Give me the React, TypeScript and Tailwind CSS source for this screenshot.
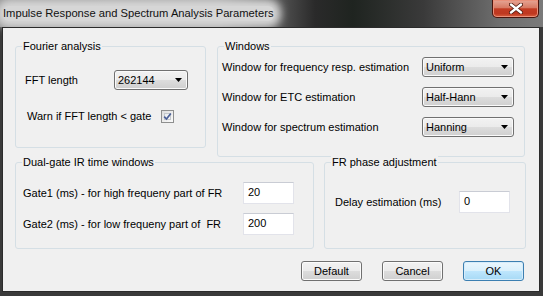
import React from 'react';

const Arrow = () => (
  <svg width="7" height="4" viewBox="0 0 7 4">
    <polygon points="0,0 7,0 3.5,4" fill="#000" />
  </svg>
);

const Combo = ({ value, className }: { value: string; className: string }) => (
  <div
    className={`${className} h-[20px] flex items-center justify-between pl-[3px] pr-[5px] border border-[#707070] rounded-[3px] bg-[linear-gradient(#f2f2f2_0%,#ebebeb_50%,#dddddd_50%,#cfcfcf_100%)] shadow-[inset_0_0_0_1px_#fafafa]`}
  >
    <span>{value}</span>
    <Arrow />
  </div>
);

const Field = ({ value, className }: { value: string; className: string }) => (
  <div
    className={`${className} h-[22px] bg-white border border-[#e2e3ea] border-t-[#c9ccd4] pl-[4px] pt-[3px] leading-[13px]`}
  >
    {value}
  </div>
);

const Group = ({
  title,
  className,
  children,
}: {
  title: string;
  className: string;
  children: React.ReactNode;
}) => (
  <fieldset className={`${className} border border-[#d5dfe5] rounded-[3px]`}>
    <legend className="ml-[6px] px-[1px] leading-[14px] bg-[#f0f0f0]">{title}</legend>
    {children}
  </fieldset>
);

const Button = ({ label, primary }: { label: string; primary?: boolean }) => (
  <div
    className={
      primary
        ? 'w-[61px] h-[20px] flex items-center justify-center rounded-[3px] border border-[#3c7fb1] bg-[linear-gradient(#eaf6fd_0%,#d9f0fc_50%,#bee6fd_50%,#a7d9f5_100%)] shadow-[inset_0_0_0_1px_#d6ecfa]'
        : 'w-[61px] h-[20px] flex items-center justify-center rounded-[3px] border border-[#707070] bg-[linear-gradient(#f2f2f2_0%,#ebebeb_50%,#dddddd_50%,#cfcfcf_100%)] shadow-[inset_0_0_0_1px_#fbfbfb]'
    }
  >
    {label}
  </div>
);

export default function App() {
  return (
    <div className="w-[543px] h-[296px] flex flex-col bg-[#3a3a3a] font-['Liberation_Sans',Arial,sans-serif] text-[11px] text-black overflow-hidden">
      {/* Title bar */}
      <div className="h-[27px] flex items-start justify-between bg-[linear-gradient(90deg,#8e8e8e_0%,#9a9a9a_40%,#2a2a2a_58%,#1f2420_65%,#3a3a3a_78%,#6e6e6e_92%,#7a7a7a_100%)]">
        <div className="mt-[6px] ml-[3px] h-[15px] flex items-center rounded-[6px] bg-[#d6d6d6] shadow-[0_0_8px_7px_#d6d6d6] text-[11.2px] text-[#111]">
          Impulse Response and Spectrum Analysis Parameters
        </div>
        <div className="mr-[4px] w-[47px] h-[18px] flex items-center justify-center rounded-b-[5px] border border-t-0 border-[#4a140c] bg-[linear-gradient(#e6a696_0%,#d77a64_45%,#c23b22_52%,#bf3820_80%,#d8603f_100%)] shadow-[inset_0_0_0_1px_#e9907a]">
          <svg width="14" height="11" viewBox="0 0 14 11">
            <path d="M2 1.5 L12 9.5 M12 1.5 L2 9.5" stroke="#4a160c" strokeWidth="4" strokeLinecap="round" />
            <path d="M2 1.5 L12 9.5 M12 1.5 L2 9.5" stroke="#fff" strokeWidth="2.4" strokeLinecap="round" />
          </svg>
        </div>
      </div>

      {/* Client area */}
      <div className="ml-[2px] mr-[3px] h-[265px] border border-[#2b2b2b] bg-[#f0f0f0] flex flex-col pt-[11px] pl-[12px]">
        <div className="h-[116px] flex items-start gap-[11px]">
          <Group title="Fourier analysis" className="w-[191px] h-[109px]">
            <div className="pl-[9px] pt-[17px]">
              <div className="h-[20px] flex items-center">
                <span className="w-[89px]">FFT length</span>
                <Combo value="262144" className="w-[74px]" />
              </div>
              <div className="mt-[20px] h-[13px] flex items-center pl-[2px]">
                <span className="w-[134px]">Warn if FFT length &lt; gate</span>
                <div className="w-[13px] h-[13px] border border-[#8e8f8f] bg-[linear-gradient(135deg,#dcdcdc,#fbfbfb)] p-[2px]">
                  <div className="w-full h-full border border-[#c4c8cc] bg-[linear-gradient(135deg,#e8ecf0,#f8f8f8)] flex items-center justify-center">
                    <svg width="9" height="9" viewBox="0 0 9 9" className="-m-[2px]">
                      <path d="M1.2 4.6 L3.5 7 L7.8 1.4" fill="none" stroke="#4a5f97" strokeWidth="1.7" />
                    </svg>
                  </div>
                </div>
              </div>
            </div>
          </Group>

          <Group title="Windows" className="w-[308px] h-[118px]">
            <div className="pl-[4px] pt-[4px] flex flex-col gap-[10px]">
              <div className="h-[20px] flex items-center">
                <span className="w-[200px]">Window for frequency resp. estimation</span>
                <Combo value="Uniform" className="w-[92px]" />
              </div>
              <div className="h-[20px] flex items-center">
                <span className="w-[200px]">Window for ETC estimation</span>
                <Combo value="Half-Hann" className="w-[92px]" />
              </div>
              <div className="h-[20px] flex items-center">
                <span className="w-[200px]">Window for spectrum estimation</span>
                <Combo value="Hanning" className="w-[92px]" />
              </div>
            </div>
          </Group>
        </div>

        <div className="flex items-start gap-[10px]">
          <Group title="Dual-gate IR time windows" className="w-[299px] h-[94px]">
            <div className="pl-[7px] pt-[13px] flex flex-col gap-[9px]">
              <div className="flex items-center">
                <span className="w-[220px]">Gate1 (ms) - for high frequeny part of FR</span>
                <Field value="20" className="w-[51px]" />
              </div>
              <div className="flex items-center">
                <span className="w-[220px]">Gate2 (ms) - for low frequeny part of&nbsp; FR</span>
                <Field value="200" className="w-[51px]" />
              </div>
            </div>
          </Group>

          <Group title="FR phase adjustment" className="w-[202px] h-[94px]">
            <div className="pl-[10px] pt-[22px] flex items-center">
              <span className="w-[124px]">Delay estimation (ms)</span>
              <Field value="0" className="w-[51px]" />
            </div>
          </Group>
        </div>

        <div className="mt-[12px] pr-[15px] flex justify-end gap-[20px]">
          <Button label="Default" />
          <Button label="Cancel" />
          <Button label="OK" primary />
        </div>
      </div>
    </div>
  );
}
